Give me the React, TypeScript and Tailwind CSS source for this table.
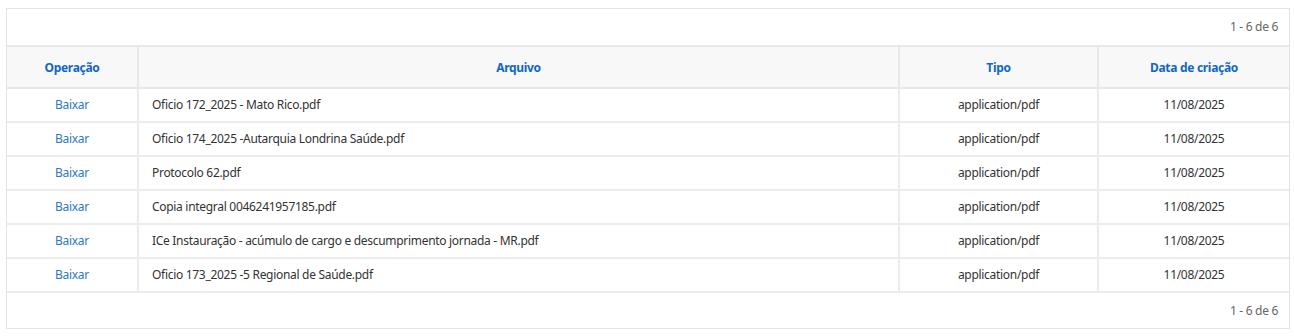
import React from "react";

const rows = [
  "Oficio 172_2025 - Mato Rico.pdf",
  "Oficio 174_2025 -Autarquia Londrina Saúde.pdf",
  "Protocolo 62.pdf",
  "Copia integral 0046241957185.pdf",
  "ICe Instauração - acúmulo de cargo e descumprimento jornada - MR.pdf",
  "Oficio 173_2025 -5 Regional de Saúde.pdf",
];

export default function App() {
  return (
    <div className="w-[1294px] h-[336px] bg-white pt-[8px] pl-[6px]" style={{ fontFamily: '"Noto Sans", "Segoe UI", sans-serif' }}>
      <div className="w-[1284px] border border-[#e3e3e3] bg-white text-[12px] tracking-[-0.3px] text-[#333]">
        <div className="h-[36px] flex items-center justify-end pr-[11px] text-[#666]">1 - 6 de 6</div>
        <table className="w-full table-fixed border-collapse">
          <colgroup>
            <col className="w-[131px]" />
            <col className="w-[761px]" />
            <col className="w-[199px]" />
            <col className="w-[191px]" />
          </colgroup>
          <thead>
            <tr className="h-[42px] bg-[#f8f8f8]">
              <th className="border-2 border-l-0 border-[#e8e8e8] pt-[2px] font-bold text-[#1266c1]">Operação</th>
              <th className="border-2 border-[#e8e8e8] pt-[2px] font-bold text-[#1266c1]">Arquivo</th>
              <th className="border-2 border-[#e8e8e8] pt-[2px] font-bold text-[#1266c1]">Tipo</th>
              <th className="border-2 border-r-0 border-[#e8e8e8] pt-[2px] font-bold text-[#1266c1]">Data de criação</th>
            </tr>
          </thead>
          <tbody>
            {rows.map((r) => (
              <tr key={r} className="h-[34px]">
                <td className="border-2 border-l-0 border-[#ececec] text-center text-[#2b78c5]">Baixar</td>
                <td className="border-2 border-[#ececec] pl-[13px]">{r}</td>
                <td className="border-2 border-[#ececec] text-center">application/pdf</td>
                <td className="border-2 border-r-0 border-[#ececec] text-center">11/08/2025</td>
              </tr>
            ))}
          </tbody>
        </table>
        <div className="h-[35px] flex items-center justify-end pr-[11px] text-[#666]">1 - 6 de 6</div>
      </div>
    </div>
  );
}
